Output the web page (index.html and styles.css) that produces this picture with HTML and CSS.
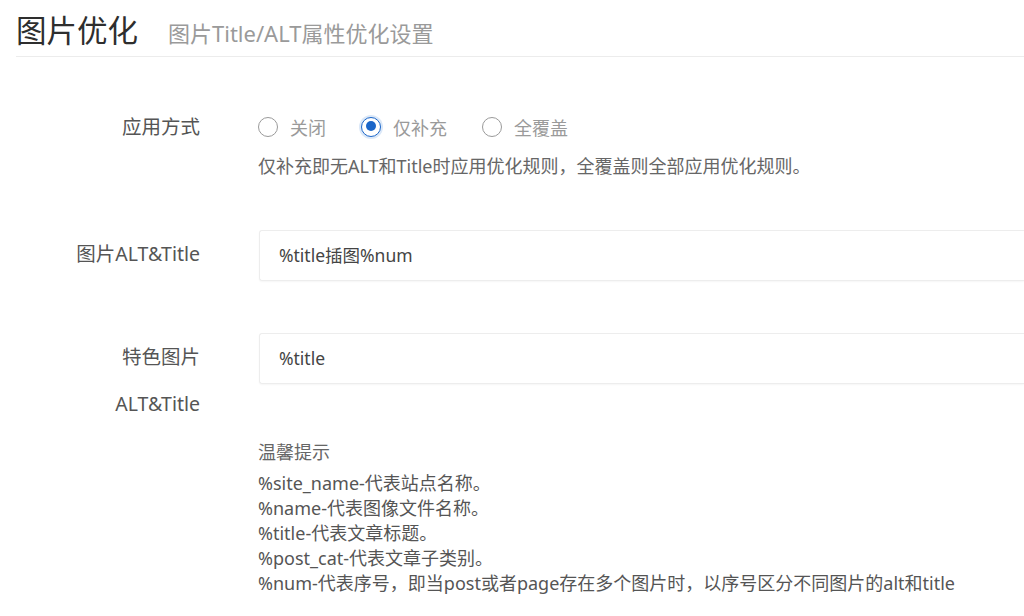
FILE: index.html
```html
<!DOCTYPE html>
<html lang="zh-CN">
<head>
<meta charset="utf-8">
<title>图片优化</title>
<link rel="stylesheet" href="styles.css">
</head>
<body>
<div class="page">
  <header class="head">
    <h1 class="title">图片优化</h1>
    <span class="subtitle">图片Title/ALT属性优化设置</span>
  </header>
  <div class="form">
    <div class="row row-mode">
      <div class="label">应用方式</div>
      <div class="control">
        <div class="radios">
          <label class="radio"><span class="dot"></span><span class="rtext">关闭</span></label>
          <label class="radio checked"><span class="dot"></span><span class="rtext">仅补充</span></label>
          <label class="radio"><span class="dot"></span><span class="rtext">全覆盖</span></label>
        </div>
        <p class="desc">仅补充即无ALT和Title时应用优化规则，全覆盖则全部应用优化规则。</p>
      </div>
    </div>
    <div class="row row-alt">
      <div class="label">图片ALT&amp;Title</div>
      <div class="control">
        <div class="input">%title插图%num</div>
      </div>
    </div>
    <div class="row row-feat">
      <div class="label">特色图片<br>ALT&amp;Title</div>
      <div class="control">
        <div class="input">%title</div>
        <div class="tips">
          <div class="tips-title">温馨提示</div>
          <ul class="tips-list">
            <li>%site_name-代表站点名称。</li>
            <li>%name-代表图像文件名称。</li>
            <li>%title-代表文章标题。</li>
            <li>%post_cat-代表文章子类别。</li>
            <li>%num-代表序号，即当post或者page存在多个图片时，以序号区分不同图片的alt和title</li>
          </ul>
        </div>
      </div>
    </div>
  </div>
</div>
</body>
</html>
```

FILE: styles.css
```css
html, body {
  margin: 0;
  padding: 0;
  background: #fff;
  overflow: hidden;
}
body {
  font-family: "Noto Sans", "Noto Sans CJK SC", sans-serif;
  color: #555;
  width: 1024px;
  height: 616px;
}
.page {
  padding-left: 16px;
}
.head {
  display: flex;
  align-items: baseline;
  height: 57px;
  border-bottom: 1px solid #ececec;
  box-sizing: border-box;
  padding-top: 10px;
}
.title {
  margin: 0;
  font-size: 30.5px;
  font-weight: 400;
  color: #2e2e2e;
  line-height: 40px;
}
.subtitle {
  margin-left: 30px;
  font-size: 22px;
  color: #9a9a9a;
}
.form {
  display: flex;
  flex-direction: column;
}
.row {
  display: grid;
  grid-template-columns: 184px 766px;
  column-gap: 58px;
  align-items: start;
}
.row-mode { margin-top: 46px; }
.row-alt { margin-top: 49px; }
.row-feat { margin-top: 52px; }
.label {
  text-align: right;
  font-size: 19.5px;
  line-height: 47px;
  color: #555;
}
.radios {
  display: flex;
  align-items: center;
  height: 47px;
  gap: 35px;
}
.radio {
  display: flex;
  align-items: center;
  gap: 12px;
}
.dot {
  width: 20px;
  height: 20px;
  box-sizing: border-box;
  border: 1.5px solid #9a9a9a;
  border-radius: 50%;
  position: relative;
  background: #fff;
}
.radio.checked .dot {
  border-color: #1b66c9;
  box-shadow: 0 0 0 2px #dbe8f8;
}
.radio.checked .dot::after {
  content: "";
  position: absolute;
  left: 3.5px;
  top: 3.5px;
  width: 10px;
  height: 10px;
  border-radius: 50%;
  background: #1b66c9;
}
.rtext {
  font-size: 18px;
  color: #9a9a9a;
}
.desc {
  margin: 1px 0 0;
  font-size: 18px;
  line-height: 30px;
  color: #666;
}
.input {
  height: 51px;
  box-sizing: border-box;
  border: 1px solid #ededed;
  border-right: none;
  border-radius: 3px 0 0 3px;
  box-shadow: 0 1px 2px rgba(0,0,0,0.04);
  padding-left: 19px;
  font-size: 17.5px;
  line-height: 49px;
  color: #444;
  margin-left: 1px;
}
.tips {
  margin-top: 56px;
  color: #555;
}
.tips-title {
  font-size: 18px;
  line-height: 25px;
  color: #666;
}
.tips-list {
  list-style: none;
  margin: 6px 0 0;
  padding: 0;
  font-size: 18px;
  line-height: 25px;
}
```
